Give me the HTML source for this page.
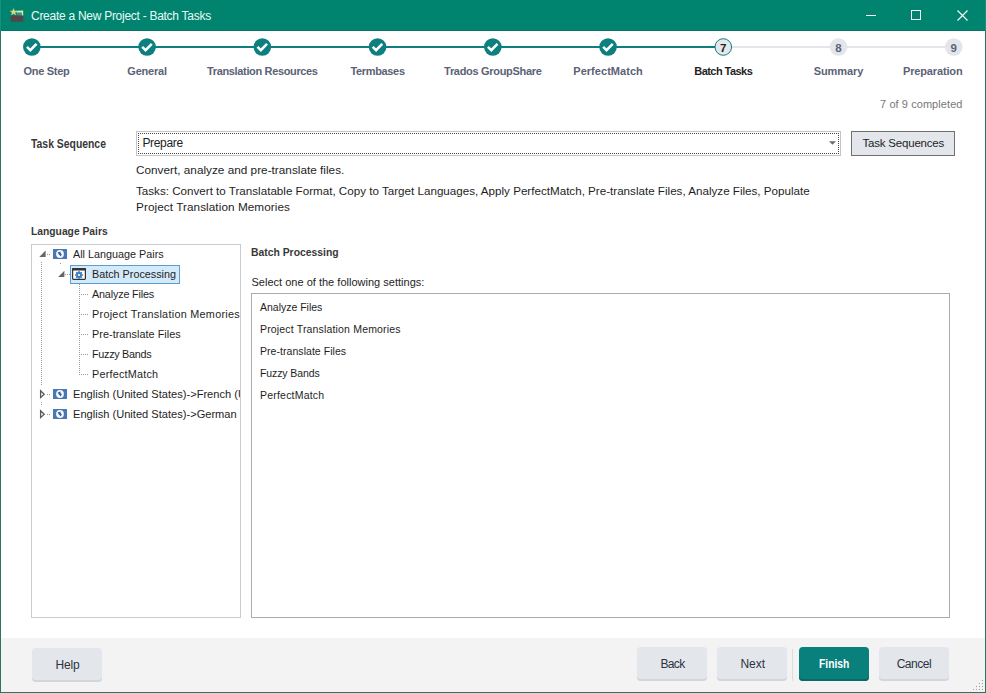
<!DOCTYPE html>
<html><head><meta charset="utf-8">
<style>
html,body{margin:0;padding:0;}
body{width:986px;height:693px;position:relative;overflow:hidden;background:#fff;font-family:"Liberation Sans",sans-serif;}
.a{position:absolute;}
.t{position:absolute;white-space:nowrap;line-height:1;}
</style></head><body>

<div class="a" style="left:0px;top:0px;width:986px;height:30px;background:#00836f"></div>
<div class="a" style="left:0px;top:30px;width:986px;height:1px;background:#0a7466"></div>
<div class="a" style="left:0px;top:31px;width:1px;height:662px;background:#277565"></div>
<div class="a" style="left:985px;top:31px;width:1px;height:662px;background:#277565"></div>
<div class="a" style="left:0px;top:0px;width:1px;height:31px;background:#13907f"></div>
<div class="a" style="left:985px;top:0px;width:1px;height:31px;background:#13907f"></div>
<div class="a" style="left:0px;top:692px;width:986px;height:1px;background:#277565"></div>
<svg class="a" style="left:8px;top:5px" width="20" height="20" viewBox="8 5 20 20">
  <rect x="16.6" y="12.2" width="5.4" height="3.6" fill="#4d8a7e"/>
  <path d="M16.4 10.8 L23.2 10.6 L23.2 15.7 L21.9 15.7 L21.9 12.4 L16.4 12.4Z" fill="#d6eeac"/>
  <path d="M10.7 15.6 H23.3 V20.3 Q23.3 21.8 21.8 21.8 H12.2 Q10.7 21.8 10.7 20.3Z" fill="#534648"/>
  <path d="M13.60 8.60 L14.48 10.89 L16.93 11.02 L15.03 12.56 L15.66 14.93 L13.60 13.60 L11.54 14.93 L12.17 12.56 L10.27 11.02 L12.72 10.89Z" fill="#f1d46c" stroke="#c9e6a0" stroke-width="0.4"/>
</svg>
<div class="t" style="left:31px;top:10px;font-size:12px;color:#e9fbf6;letter-spacing:-0.273px;">Create a New Project - Batch Tasks</div>
<div class="a" style="left:866px;top:15px;width:10px;height:1px;background:#fff"></div>
<div class="a" style="left:911px;top:10px;width:8px;height:8px;border:1px solid #fff"></div>
<svg class="a" style="left:957px;top:10px" width="11" height="11" viewBox="0 0 11 11"><path d="M0.5 0.5 L10.5 10.5 M10.5 0.5 L0.5 10.5" stroke="#fff" stroke-width="1.1"/></svg>
<svg class="a" style="left:0;top:30px" width="986" height="40" viewBox="0 30 986 40"><rect x="31.85" y="46" width="691.4399999999999" height="2" fill="#0c7f7e"/><rect x="723.29" y="46" width="230.48000000000002" height="2" fill="#e2e5e9"/><circle cx="31.85" cy="47" r="8.8" fill="#0c7f7e"/><path d="M26.95 46.9 L30.35 50.1 L36.55 43.9" stroke="#fff" stroke-width="2.6" fill="none"/><circle cx="147.09" cy="47" r="8.8" fill="#0c7f7e"/><path d="M142.19 46.9 L145.59 50.1 L151.79 43.9" stroke="#fff" stroke-width="2.6" fill="none"/><circle cx="262.33" cy="47" r="8.8" fill="#0c7f7e"/><path d="M257.43 46.9 L260.83 50.1 L267.03 43.9" stroke="#fff" stroke-width="2.6" fill="none"/><circle cx="377.57" cy="47" r="8.8" fill="#0c7f7e"/><path d="M372.67 46.9 L376.07 50.1 L382.27 43.9" stroke="#fff" stroke-width="2.6" fill="none"/><circle cx="492.81" cy="47" r="8.8" fill="#0c7f7e"/><path d="M487.91 46.9 L491.31 50.1 L497.51 43.9" stroke="#fff" stroke-width="2.6" fill="none"/><circle cx="608.05" cy="47" r="8.8" fill="#0c7f7e"/><path d="M603.15 46.9 L606.55 50.1 L612.75 43.9" stroke="#fff" stroke-width="2.6" fill="none"/><circle cx="723.29" cy="47" r="8.3" fill="#e4e7eb" stroke="#0c7f7e" stroke-width="1"/><circle cx="838.53" cy="47" r="8.8" fill="#e2e5e9"/><circle cx="953.77" cy="47" r="8.8" fill="#e2e5e9"/></svg>
<div class="t" style="left:714.29px;width:18px;text-align:center;top:42.5px;font-size:11.5px;color:#222;font-weight:700;">7</div>
<div class="t" style="left:829.53px;width:18px;text-align:center;top:42.5px;font-size:11.5px;color:#5c6478;font-weight:700;">8</div>
<div class="t" style="left:944.77px;width:18px;text-align:center;top:42.5px;font-size:11.5px;color:#5c6478;font-weight:700;">9</div>
<div class="t" style="left:23.5px;top:66px;font-size:11px;color:#5b6275;font-weight:700;letter-spacing:-0.286px;">One Step</div>
<div class="t" style="left:47.09px;width:200px;text-align:center;top:66px;font-size:11px;color:#5b6275;font-weight:700;letter-spacing:-0.217px;">General</div>
<div class="t" style="left:162.32999999999998px;width:200px;text-align:center;top:66px;font-size:11px;color:#5b6275;font-weight:700;letter-spacing:-0.350px;">Translation Resources</div>
<div class="t" style="left:277.57px;width:200px;text-align:center;top:66px;font-size:11px;color:#5b6275;font-weight:700;letter-spacing:-0.338px;">Termbases</div>
<div class="t" style="left:392.81px;width:200px;text-align:center;top:66px;font-size:11px;color:#5b6275;font-weight:700;letter-spacing:-0.312px;">Trados GroupShare</div>
<div class="t" style="left:508.04999999999995px;width:200px;text-align:center;top:66px;font-size:11px;color:#5b6275;font-weight:700;letter-spacing:0.036px;">PerfectMatch</div>
<div class="t" style="left:623.29px;width:200px;text-align:center;top:66px;font-size:11px;color:#1f1f1f;font-weight:700;letter-spacing:-0.550px;">Batch Tasks</div>
<div class="t" style="left:738.53px;width:200px;text-align:center;top:66px;font-size:11px;color:#5b6275;font-weight:700;letter-spacing:-0.083px;">Summary</div>
<div class="t" style="right:23.5px;top:66px;font-size:11px;color:#5b6275;font-weight:700;letter-spacing:-0.150px;">Preparation</div>
<div class="t" style="right:23.5px;top:99px;font-size:11px;color:#787878;letter-spacing:0.067px;">7 of 9 completed</div>
<div class="t" style="left:30.7px;top:138px;font-size:12px;color:#383838;font-weight:700;transform:scaleX(0.8663);transform-origin:0 0;">Task Sequence</div>
<div class="a" style="left:136px;top:131px;width:703px;height:23px;border:1px solid #c4c4c4;background:#fff"></div>
<div class="a" style="left:138px;top:133px;width:701px;height:21px;border:1px dotted #4a4a4a;box-sizing:border-box;"></div>
<div class="t" style="left:142.4px;top:137px;font-size:12px;color:#1e1e1e;letter-spacing:-0.333px;">Prepare</div>
<svg class="a" style="left:828px;top:140px" width="9" height="6" viewBox="0 0 9 6"><path d="M1 1.2 H8 L4.5 4.8Z" fill="#6d6d6d"/></svg>
<div class="a" style="left:851px;top:131px;width:102px;height:23px;border:1px solid #6f6f6f;background:#e3e7ec"></div>
<div class="t" style="left:862.5px;top:138px;font-size:11.5px;color:#1e1e1e;letter-spacing:-0.200px;">Task Sequences</div>
<div class="t" style="left:136px;top:164px;font-size:11.75px;color:#1e1e1e;letter-spacing:0.015px;">Convert, analyze and pre-translate files.</div>
<div class="t" style="left:136px;top:185px;font-size:11.63px;color:#1e1e1e;">Tasks: Convert to Translatable Format, Copy to Target Languages, Apply PerfectMatch, Pre-translate Files, Analyze Files, Populate</div>
<div class="t" style="left:136px;top:201px;font-size:11.75px;color:#1e1e1e;letter-spacing:0.067px;">Project Translation Memories</div>
<div class="t" style="left:30.7px;top:226px;font-size:11.5px;color:#383838;font-weight:700;transform:scaleX(0.8953);transform-origin:0 0;">Language Pairs</div>
<div class="a" style="left:31px;top:244px;width:208px;height:372px;border:1px solid #c8ccd0;background:#fff"></div>
<svg class="a" style="left:32px;top:245px" width="208" height="372" viewBox="32 245 208 372"><rect x="70.5" y="265.5" width="109" height="18" fill="#d3eafb" stroke="#5d9cd0" stroke-width="1"/><rect x="41" y="262" width="1" height="1" fill="#9a9a9a"/><rect x="41" y="264" width="1" height="1" fill="#9a9a9a"/><rect x="41" y="266" width="1" height="1" fill="#9a9a9a"/><rect x="41" y="268" width="1" height="1" fill="#9a9a9a"/><rect x="41" y="270" width="1" height="1" fill="#9a9a9a"/><rect x="41" y="272" width="1" height="1" fill="#9a9a9a"/><rect x="41" y="274" width="1" height="1" fill="#9a9a9a"/><rect x="41" y="276" width="1" height="1" fill="#9a9a9a"/><rect x="41" y="278" width="1" height="1" fill="#9a9a9a"/><rect x="41" y="280" width="1" height="1" fill="#9a9a9a"/><rect x="41" y="282" width="1" height="1" fill="#9a9a9a"/><rect x="41" y="284" width="1" height="1" fill="#9a9a9a"/><rect x="41" y="286" width="1" height="1" fill="#9a9a9a"/><rect x="41" y="288" width="1" height="1" fill="#9a9a9a"/><rect x="41" y="290" width="1" height="1" fill="#9a9a9a"/><rect x="41" y="292" width="1" height="1" fill="#9a9a9a"/><rect x="41" y="294" width="1" height="1" fill="#9a9a9a"/><rect x="41" y="296" width="1" height="1" fill="#9a9a9a"/><rect x="41" y="298" width="1" height="1" fill="#9a9a9a"/><rect x="41" y="300" width="1" height="1" fill="#9a9a9a"/><rect x="41" y="302" width="1" height="1" fill="#9a9a9a"/><rect x="41" y="304" width="1" height="1" fill="#9a9a9a"/><rect x="41" y="306" width="1" height="1" fill="#9a9a9a"/><rect x="41" y="308" width="1" height="1" fill="#9a9a9a"/><rect x="41" y="310" width="1" height="1" fill="#9a9a9a"/><rect x="41" y="312" width="1" height="1" fill="#9a9a9a"/><rect x="41" y="314" width="1" height="1" fill="#9a9a9a"/><rect x="41" y="316" width="1" height="1" fill="#9a9a9a"/><rect x="41" y="318" width="1" height="1" fill="#9a9a9a"/><rect x="41" y="320" width="1" height="1" fill="#9a9a9a"/><rect x="41" y="322" width="1" height="1" fill="#9a9a9a"/><rect x="41" y="324" width="1" height="1" fill="#9a9a9a"/><rect x="41" y="326" width="1" height="1" fill="#9a9a9a"/><rect x="41" y="328" width="1" height="1" fill="#9a9a9a"/><rect x="41" y="330" width="1" height="1" fill="#9a9a9a"/><rect x="41" y="332" width="1" height="1" fill="#9a9a9a"/><rect x="41" y="334" width="1" height="1" fill="#9a9a9a"/><rect x="41" y="336" width="1" height="1" fill="#9a9a9a"/><rect x="41" y="338" width="1" height="1" fill="#9a9a9a"/><rect x="41" y="340" width="1" height="1" fill="#9a9a9a"/><rect x="41" y="342" width="1" height="1" fill="#9a9a9a"/><rect x="41" y="344" width="1" height="1" fill="#9a9a9a"/><rect x="41" y="346" width="1" height="1" fill="#9a9a9a"/><rect x="41" y="348" width="1" height="1" fill="#9a9a9a"/><rect x="41" y="350" width="1" height="1" fill="#9a9a9a"/><rect x="41" y="352" width="1" height="1" fill="#9a9a9a"/><rect x="41" y="354" width="1" height="1" fill="#9a9a9a"/><rect x="41" y="356" width="1" height="1" fill="#9a9a9a"/><rect x="41" y="358" width="1" height="1" fill="#9a9a9a"/><rect x="41" y="360" width="1" height="1" fill="#9a9a9a"/><rect x="41" y="362" width="1" height="1" fill="#9a9a9a"/><rect x="41" y="364" width="1" height="1" fill="#9a9a9a"/><rect x="41" y="366" width="1" height="1" fill="#9a9a9a"/><rect x="41" y="368" width="1" height="1" fill="#9a9a9a"/><rect x="41" y="370" width="1" height="1" fill="#9a9a9a"/><rect x="41" y="372" width="1" height="1" fill="#9a9a9a"/><rect x="41" y="374" width="1" height="1" fill="#9a9a9a"/><rect x="41" y="376" width="1" height="1" fill="#9a9a9a"/><rect x="41" y="378" width="1" height="1" fill="#9a9a9a"/><rect x="41" y="380" width="1" height="1" fill="#9a9a9a"/><rect x="41" y="382" width="1" height="1" fill="#9a9a9a"/><rect x="41" y="384" width="1" height="1" fill="#9a9a9a"/><rect x="41" y="402" width="1" height="1" fill="#9a9a9a"/><rect x="41" y="404" width="1" height="1" fill="#9a9a9a"/><rect x="47" y="254" width="1" height="1" fill="#9a9a9a"/><rect x="49" y="254" width="1" height="1" fill="#9a9a9a"/><rect x="47" y="394" width="1" height="1" fill="#9a9a9a"/><rect x="49" y="394" width="1" height="1" fill="#9a9a9a"/><rect x="47" y="414" width="1" height="1" fill="#9a9a9a"/><rect x="49" y="414" width="1" height="1" fill="#9a9a9a"/><rect x="65" y="274" width="1" height="1" fill="#9a9a9a"/><rect x="67" y="274" width="1" height="1" fill="#9a9a9a"/><rect x="69" y="274" width="1" height="1" fill="#9a9a9a"/><rect x="79" y="284" width="1" height="1" fill="#9a9a9a"/><rect x="79" y="286" width="1" height="1" fill="#9a9a9a"/><rect x="79" y="288" width="1" height="1" fill="#9a9a9a"/><rect x="79" y="290" width="1" height="1" fill="#9a9a9a"/><rect x="79" y="292" width="1" height="1" fill="#9a9a9a"/><rect x="79" y="294" width="1" height="1" fill="#9a9a9a"/><rect x="79" y="296" width="1" height="1" fill="#9a9a9a"/><rect x="79" y="298" width="1" height="1" fill="#9a9a9a"/><rect x="79" y="300" width="1" height="1" fill="#9a9a9a"/><rect x="79" y="302" width="1" height="1" fill="#9a9a9a"/><rect x="79" y="304" width="1" height="1" fill="#9a9a9a"/><rect x="79" y="306" width="1" height="1" fill="#9a9a9a"/><rect x="79" y="308" width="1" height="1" fill="#9a9a9a"/><rect x="79" y="310" width="1" height="1" fill="#9a9a9a"/><rect x="79" y="312" width="1" height="1" fill="#9a9a9a"/><rect x="79" y="314" width="1" height="1" fill="#9a9a9a"/><rect x="79" y="316" width="1" height="1" fill="#9a9a9a"/><rect x="79" y="318" width="1" height="1" fill="#9a9a9a"/><rect x="79" y="320" width="1" height="1" fill="#9a9a9a"/><rect x="79" y="322" width="1" height="1" fill="#9a9a9a"/><rect x="79" y="324" width="1" height="1" fill="#9a9a9a"/><rect x="79" y="326" width="1" height="1" fill="#9a9a9a"/><rect x="79" y="328" width="1" height="1" fill="#9a9a9a"/><rect x="79" y="330" width="1" height="1" fill="#9a9a9a"/><rect x="79" y="332" width="1" height="1" fill="#9a9a9a"/><rect x="79" y="334" width="1" height="1" fill="#9a9a9a"/><rect x="79" y="336" width="1" height="1" fill="#9a9a9a"/><rect x="79" y="338" width="1" height="1" fill="#9a9a9a"/><rect x="79" y="340" width="1" height="1" fill="#9a9a9a"/><rect x="79" y="342" width="1" height="1" fill="#9a9a9a"/><rect x="79" y="344" width="1" height="1" fill="#9a9a9a"/><rect x="79" y="346" width="1" height="1" fill="#9a9a9a"/><rect x="79" y="348" width="1" height="1" fill="#9a9a9a"/><rect x="79" y="350" width="1" height="1" fill="#9a9a9a"/><rect x="79" y="352" width="1" height="1" fill="#9a9a9a"/><rect x="79" y="354" width="1" height="1" fill="#9a9a9a"/><rect x="79" y="356" width="1" height="1" fill="#9a9a9a"/><rect x="79" y="358" width="1" height="1" fill="#9a9a9a"/><rect x="79" y="360" width="1" height="1" fill="#9a9a9a"/><rect x="79" y="362" width="1" height="1" fill="#9a9a9a"/><rect x="79" y="364" width="1" height="1" fill="#9a9a9a"/><rect x="79" y="366" width="1" height="1" fill="#9a9a9a"/><rect x="79" y="368" width="1" height="1" fill="#9a9a9a"/><rect x="79" y="370" width="1" height="1" fill="#9a9a9a"/><rect x="79" y="372" width="1" height="1" fill="#9a9a9a"/><rect x="79" y="374" width="1" height="1" fill="#9a9a9a"/><rect x="81" y="294" width="1" height="1" fill="#9a9a9a"/><rect x="83" y="294" width="1" height="1" fill="#9a9a9a"/><rect x="85" y="294" width="1" height="1" fill="#9a9a9a"/><rect x="87" y="294" width="1" height="1" fill="#9a9a9a"/><rect x="81" y="314" width="1" height="1" fill="#9a9a9a"/><rect x="83" y="314" width="1" height="1" fill="#9a9a9a"/><rect x="85" y="314" width="1" height="1" fill="#9a9a9a"/><rect x="87" y="314" width="1" height="1" fill="#9a9a9a"/><rect x="81" y="334" width="1" height="1" fill="#9a9a9a"/><rect x="83" y="334" width="1" height="1" fill="#9a9a9a"/><rect x="85" y="334" width="1" height="1" fill="#9a9a9a"/><rect x="87" y="334" width="1" height="1" fill="#9a9a9a"/><rect x="81" y="354" width="1" height="1" fill="#9a9a9a"/><rect x="83" y="354" width="1" height="1" fill="#9a9a9a"/><rect x="85" y="354" width="1" height="1" fill="#9a9a9a"/><rect x="87" y="354" width="1" height="1" fill="#9a9a9a"/><rect x="81" y="374" width="1" height="1" fill="#9a9a9a"/><rect x="83" y="374" width="1" height="1" fill="#9a9a9a"/><rect x="85" y="374" width="1" height="1" fill="#9a9a9a"/><rect x="87" y="374" width="1" height="1" fill="#9a9a9a"/><rect x="60" y="263" width="1" height="1" fill="#9a9a9a"/><path d="M45.6 250.6 L45.6 256.9 L39.3 256.9 Z" fill="#666"/><path d="M64.4 270.8 L64.4 277.1 L58.1 277.1 Z" fill="#666"/><path d="M40.6 390.8 L44.2 394.2 L40.6 397.6 Z" fill="none" stroke="#595959" stroke-width="1.3"/><path d="M40.6 410.8 L44.2 414.2 L40.6 417.6 Z" fill="none" stroke="#595959" stroke-width="1.3"/><rect x="53" y="249" width="14" height="10" fill="#4978b3"/><circle cx="60" cy="254" r="3.9" fill="#f4f9ff"/><path d="M57.6 252.4 L60.9 251.5 L60.3 253.0 L61.8 254.0 L60.9 256.6 L59.7 255.2 L58.9 254.6 L58.3 253.6 Z" fill="#3a5f90"/><rect x="53" y="389" width="14" height="10" fill="#4978b3"/><circle cx="60" cy="394" r="3.9" fill="#f4f9ff"/><path d="M57.6 392.4 L60.9 391.5 L60.3 393.0 L61.8 394.0 L60.9 396.6 L59.7 395.2 L58.9 394.6 L58.3 393.6 Z" fill="#3a5f90"/><rect x="53" y="409" width="14" height="10" fill="#4978b3"/><circle cx="60" cy="414" r="3.9" fill="#f4f9ff"/><path d="M57.6 412.4 L60.9 411.5 L60.3 413.0 L61.8 414.0 L60.9 416.6 L59.7 415.2 L58.9 414.6 L58.3 413.6 Z" fill="#3a5f90"/><rect x="72.6" y="268.6" width="12.8" height="10.8" rx="0.8" fill="#fff" stroke="#333" stroke-width="1.2"/><rect x="72" y="268" width="14" height="2.6" rx="0.8" fill="#333"/><circle cx="79" cy="275" r="2.9" fill="#3d7cc0"/><rect x="78.2" y="271.1" width="1.6" height="1.6" fill="#3d7cc0" transform="rotate(0 79 275)"/><rect x="78.2" y="271.1" width="1.6" height="1.6" fill="#3d7cc0" transform="rotate(45 79 275)"/><rect x="78.2" y="271.1" width="1.6" height="1.6" fill="#3d7cc0" transform="rotate(90 79 275)"/><rect x="78.2" y="271.1" width="1.6" height="1.6" fill="#3d7cc0" transform="rotate(135 79 275)"/><rect x="78.2" y="271.1" width="1.6" height="1.6" fill="#3d7cc0" transform="rotate(180 79 275)"/><rect x="78.2" y="271.1" width="1.6" height="1.6" fill="#3d7cc0" transform="rotate(225 79 275)"/><rect x="78.2" y="271.1" width="1.6" height="1.6" fill="#3d7cc0" transform="rotate(270 79 275)"/><rect x="78.2" y="271.1" width="1.6" height="1.6" fill="#3d7cc0" transform="rotate(315 79 275)"/><circle cx="79" cy="275" r="1.1" fill="#fff"/></svg>
<div class="a" style="left:32px;top:245px;width:208px;height:372px;overflow:hidden">
<div class="t" style="left:41px;top:4px;font-size:10.8px;color:#1e1e1e;">All Language Pairs</div>
<div class="t" style="left:60px;top:24px;font-size:10.8px;color:#1e1e1e;">Batch Processing</div>
<div class="t" style="left:60px;top:44px;font-size:10.8px;color:#1e1e1e;letter-spacing:-0.167px;">Analyze Files</div>
<div class="t" style="left:60px;top:64px;font-size:10.8px;color:#1e1e1e;letter-spacing:0.293px;">Project Translation Memories</div>
<div class="t" style="left:60px;top:84px;font-size:10.8px;color:#1e1e1e;letter-spacing:0.061px;">Pre-translate Files</div>
<div class="t" style="left:60px;top:104px;font-size:10.8px;color:#1e1e1e;letter-spacing:-0.280px;">Fuzzy Bands</div>
<div class="t" style="left:60px;top:124px;font-size:10.8px;color:#1e1e1e;letter-spacing:0.227px;">PerfectMatch</div>
<div class="t" style="left:41px;top:144px;font-size:11.1px;color:#1e1e1e;">English (United States)-&gt;French (United States)</div>
<div class="t" style="left:41px;top:164px;font-size:11.1px;color:#1e1e1e;">English (United States)-&gt;German (Germany)</div>
</div>
<div class="t" style="left:250.7px;top:247px;font-size:11.8px;color:#383838;font-weight:700;transform:scaleX(0.8788);transform-origin:0 0;">Batch Processing</div>
<div class="t" style="left:251.5px;top:277px;font-size:11px;color:#1e1e1e;letter-spacing:0.011px;">Select one of the following settings:</div>
<div class="a" style="left:251px;top:293px;width:697px;height:323px;border:1px solid #ababab;background:#fff"></div>
<div class="t" style="left:260px;top:302px;font-size:10.5px;color:#1e1e1e;letter-spacing:-0.008px;">Analyze Files</div>
<div class="t" style="left:260px;top:324px;font-size:10.5px;color:#1e1e1e;letter-spacing:0.167px;">Project Translation Memories</div>
<div class="t" style="left:260px;top:346px;font-size:10.5px;color:#1e1e1e;letter-spacing:0.050px;">Pre-translate Files</div>
<div class="t" style="left:260px;top:368px;font-size:10.5px;color:#1e1e1e;letter-spacing:-0.100px;">Fuzzy Bands</div>
<div class="t" style="left:260px;top:390px;font-size:10.5px;color:#1e1e1e;letter-spacing:0.209px;">PerfectMatch</div>
<div class="a" style="left:1px;top:638px;width:984px;height:54px;background:#f3f3f3"></div>
<div class="a" style="left:32px;top:648px;width:70px;height:34px;border-radius:4px;background:#e3e7eb;box-shadow:inset 0 -2px 0 #d2d6db"></div>
<div class="t" style="left:55.5px;top:659px;font-size:12px;color:#2d3340;letter-spacing:-0.133px;">Help</div>
<div class="a" style="left:637px;top:647px;width:70px;height:34px;border-radius:4px;background:#e3e7eb;box-shadow:inset 0 -2px 0 #d2d6db"></div>
<div class="t" style="left:660.5px;top:658px;font-size:12px;color:#2d3340;letter-spacing:-0.667px;">Back</div>
<div class="a" style="left:717px;top:647px;width:70px;height:34px;border-radius:4px;background:#e3e7eb;box-shadow:inset 0 -2px 0 #d2d6db"></div>
<div class="t" style="left:740.5px;top:658px;font-size:12px;color:#2d3340;letter-spacing:-0.067px;">Next</div>
<div class="a" style="left:792px;top:649px;width:1px;height:32px;background:#dadde0"></div>
<div class="a" style="left:799px;top:647px;width:70px;height:34px;border-radius:4px;background:#0a807c;box-shadow:inset 0 -2px 0 #086a67"></div>
<div class="t" style="left:818.8px;top:658px;font-size:12px;color:#ffffff;font-weight:700;transform:scaleX(0.8571);transform-origin:0 0;">Finish</div>
<div class="a" style="left:879px;top:647px;width:70px;height:34px;border-radius:4px;background:#e3e7eb;box-shadow:inset 0 -2px 0 #d2d6db"></div>
<div class="t" style="left:896.7px;top:658px;font-size:12px;color:#2d3340;letter-spacing:-0.480px;">Cancel</div>
<div class="a" style="left:982px;top:680px;width:1px;height:1px;background:#9c9c9c"></div><div class="a" style="left:982px;top:683px;width:1px;height:1px;background:#9c9c9c"></div><div class="a" style="left:979px;top:683px;width:1px;height:1px;background:#9c9c9c"></div><div class="a" style="left:982px;top:686px;width:1px;height:1px;background:#9c9c9c"></div><div class="a" style="left:979px;top:686px;width:1px;height:1px;background:#9c9c9c"></div><div class="a" style="left:976px;top:686px;width:1px;height:1px;background:#9c9c9c"></div><div class="a" style="left:982px;top:689px;width:1px;height:1px;background:#9c9c9c"></div><div class="a" style="left:979px;top:689px;width:1px;height:1px;background:#9c9c9c"></div><div class="a" style="left:976px;top:689px;width:1px;height:1px;background:#9c9c9c"></div><div class="a" style="left:973px;top:689px;width:1px;height:1px;background:#9c9c9c"></div>
</body></html>
